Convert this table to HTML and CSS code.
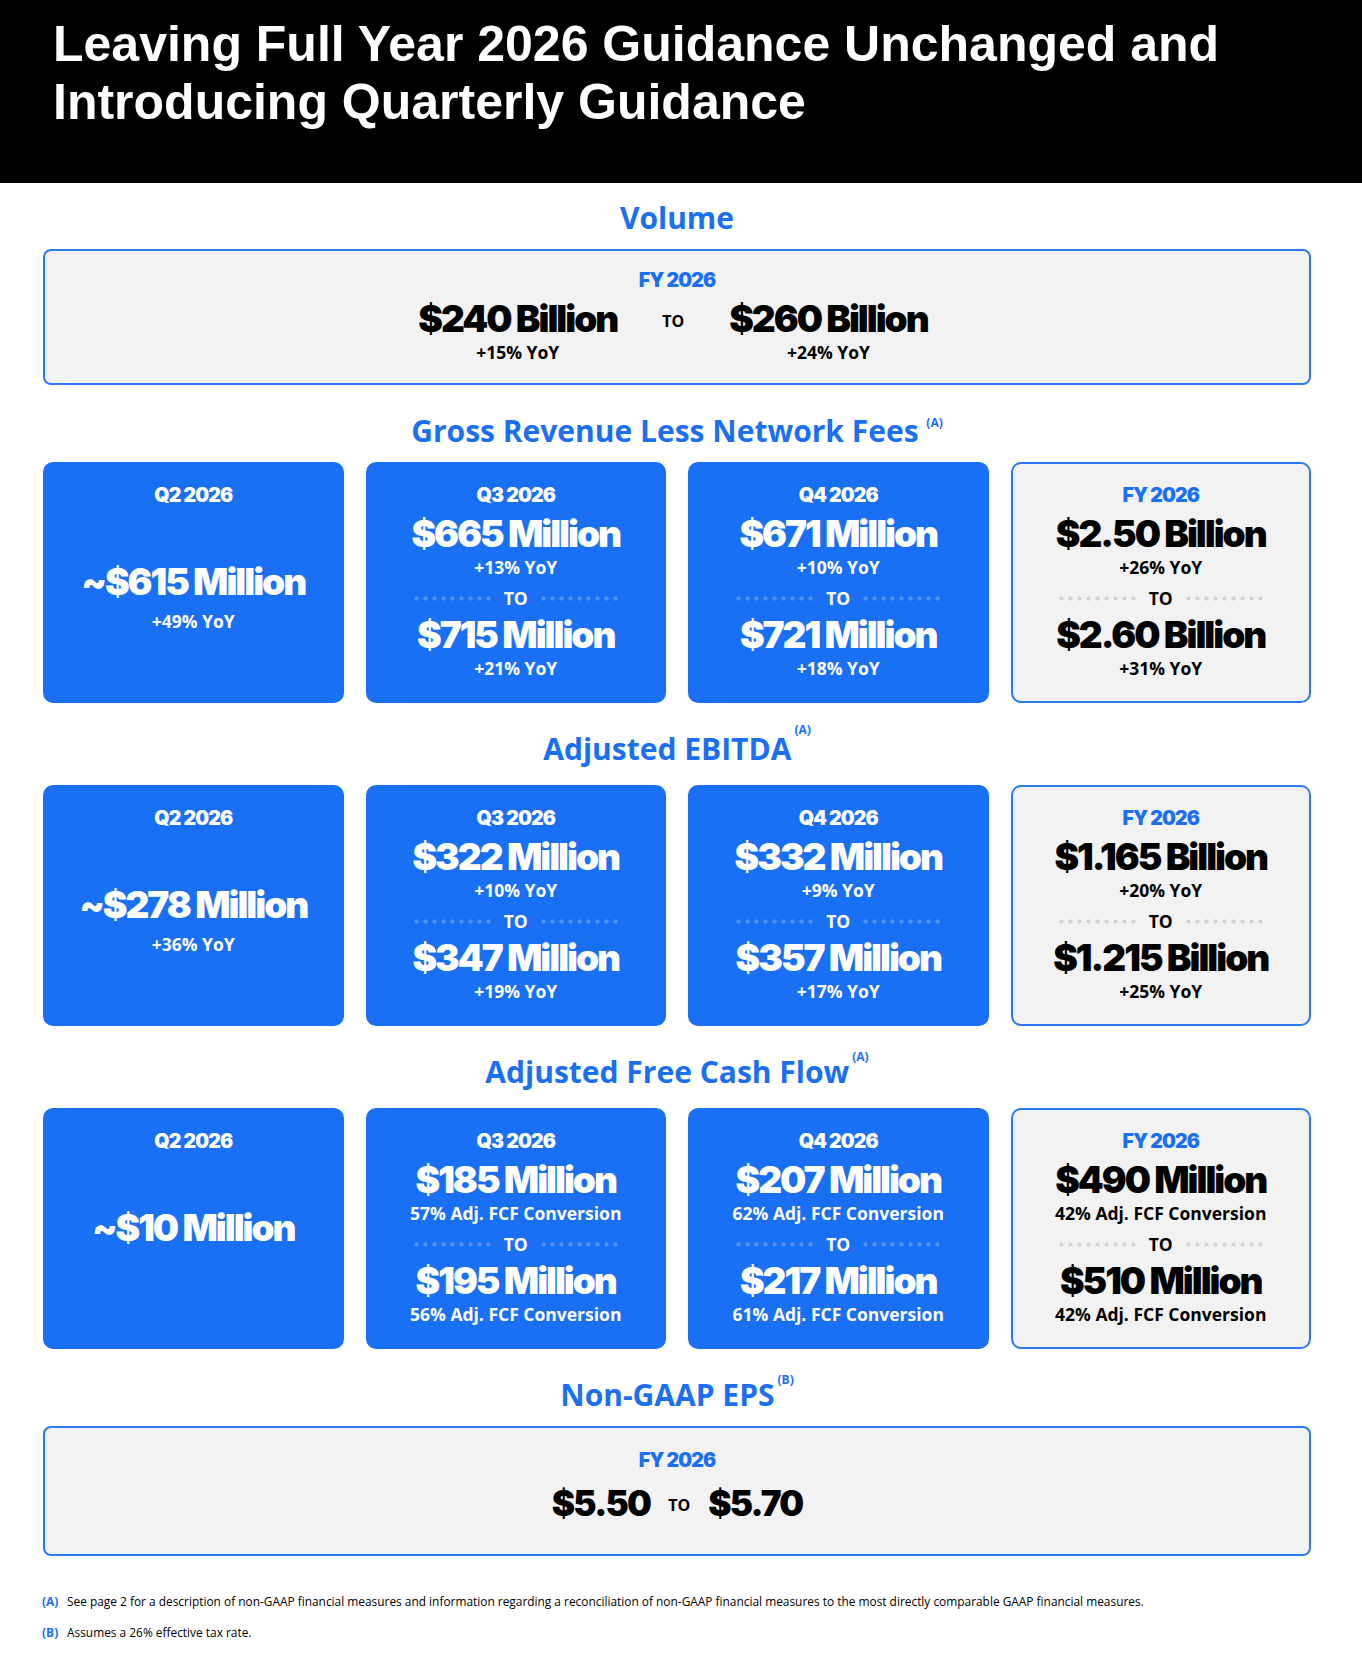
FILE: index.html
```html
<!DOCTYPE html>
<html lang="en">
<head>
<meta charset="utf-8">
<title>Guidance</title>
<link rel="stylesheet" href="styles.css">
</head>
<body>
<header class="hero">
  <h1 class="hero-title">Leaving Full Year 2026 Guidance Unchanged and<br>Introducing Quarterly Guidance</h1>
</header>
<main class="content">
  <section class="section section-first">
    <h2 class="sec-title">Volume</h2>
    <div class="panel panel-volume">
      <div class="label">FY 2026</div>
      <div class="range range-wide">
        <div class="range-item"><div class="num">$240 Billion</div><div class="sub">+15% YoY</div></div>
        <div class="to">TO</div>
        <div class="range-item"><div class="num">$260 Billion</div><div class="sub">+24% YoY</div></div>
      </div>
    </div>
  </section>

  <section class="section">
    <h2 class="sec-title">Gross Revenue Less Network Fees <sup class="mark mark-low">(A)</sup></h2>
    <div class="cards">
      <div class="card card-blue card-single">
        <div class="label">Q2 2026</div>
        <div class="num">~$615 Million</div>
        <div class="sub">+49% YoY</div>
      </div>
      <div class="card card-blue">
        <div class="label">Q3 2026</div>
        <div class="num">$665 Million</div>
        <div class="sub">+13% YoY</div>
        <div class="sep"><span class="dots"></span><span class="sep-to">TO</span><span class="dots"></span></div>
        <div class="num num-2">$715 Million</div>
        <div class="sub">+21% YoY</div>
      </div>
      <div class="card card-blue">
        <div class="label">Q4 2026</div>
        <div class="num">$671 Million</div>
        <div class="sub">+10% YoY</div>
        <div class="sep"><span class="dots"></span><span class="sep-to">TO</span><span class="dots"></span></div>
        <div class="num num-2">$721 Million</div>
        <div class="sub">+18% YoY</div>
      </div>
      <div class="card card-fy">
        <div class="label">FY 2026</div>
        <div class="num">$2.50 Billion</div>
        <div class="sub">+26% YoY</div>
        <div class="sep"><span class="dots"></span><span class="sep-to">TO</span><span class="dots"></span></div>
        <div class="num num-2">$2.60 Billion</div>
        <div class="sub">+31% YoY</div>
      </div>
    </div>
  </section>

  <section class="section section-tall">
    <h2 class="sec-title">Adjusted EBITDA<sup class="mark mark-high">(A)</sup></h2>
    <div class="cards">
      <div class="card card-blue card-single">
        <div class="label">Q2 2026</div>
        <div class="num">~$278 Million</div>
        <div class="sub">+36% YoY</div>
      </div>
      <div class="card card-blue">
        <div class="label">Q3 2026</div>
        <div class="num">$322 Million</div>
        <div class="sub">+10% YoY</div>
        <div class="sep"><span class="dots"></span><span class="sep-to">TO</span><span class="dots"></span></div>
        <div class="num num-2">$347 Million</div>
        <div class="sub">+19% YoY</div>
      </div>
      <div class="card card-blue">
        <div class="label">Q4 2026</div>
        <div class="num">$332 Million</div>
        <div class="sub">+9% YoY</div>
        <div class="sep"><span class="dots"></span><span class="sep-to">TO</span><span class="dots"></span></div>
        <div class="num num-2">$357 Million</div>
        <div class="sub">+17% YoY</div>
      </div>
      <div class="card card-fy">
        <div class="label">FY 2026</div>
        <div class="num">$1.165 Billion</div>
        <div class="sub">+20% YoY</div>
        <div class="sep"><span class="dots"></span><span class="sep-to">TO</span><span class="dots"></span></div>
        <div class="num num-2">$1.215 Billion</div>
        <div class="sub">+25% YoY</div>
      </div>
    </div>
  </section>

  <section class="section section-tall">
    <h2 class="sec-title">Adjusted Free Cash Flow<sup class="mark mark-mid">(A)</sup></h2>
    <div class="cards">
      <div class="card card-blue card-single">
        <div class="label">Q2 2026</div>
        <div class="num">~$10 Million</div>
      </div>
      <div class="card card-blue">
        <div class="label">Q3 2026</div>
        <div class="num">$185 Million</div>
        <div class="sub">57% Adj. FCF Conversion</div>
        <div class="sep"><span class="dots"></span><span class="sep-to">TO</span><span class="dots"></span></div>
        <div class="num num-2">$195 Million</div>
        <div class="sub">56% Adj. FCF Conversion</div>
      </div>
      <div class="card card-blue">
        <div class="label">Q4 2026</div>
        <div class="num">$207 Million</div>
        <div class="sub">62% Adj. FCF Conversion</div>
        <div class="sep"><span class="dots"></span><span class="sep-to">TO</span><span class="dots"></span></div>
        <div class="num num-2">$217 Million</div>
        <div class="sub">61% Adj. FCF Conversion</div>
      </div>
      <div class="card card-fy">
        <div class="label">FY 2026</div>
        <div class="num">$490 Million</div>
        <div class="sub">42% Adj. FCF Conversion</div>
        <div class="sep"><span class="dots"></span><span class="sep-to">TO</span><span class="dots"></span></div>
        <div class="num num-2">$510 Million</div>
        <div class="sub">42% Adj. FCF Conversion</div>
      </div>
    </div>
  </section>

  <section class="section">
    <h2 class="sec-title">Non-GAAP EPS<sup class="mark mark-mid">(B)</sup></h2>
    <div class="panel panel-eps">
      <div class="label">FY 2026</div>
      <div class="range range-tight">
        <div class="num">$5.50</div>
        <div class="to">TO</div>
        <div class="num">$5.70</div>
      </div>
    </div>
  </section>

  <footer class="notes">
    <p class="note"><span class="note-key">(A)</span>See page 2 for a description of non-GAAP financial measures and information regarding a reconciliation of non-GAAP financial measures to the most directly comparable GAAP financial measures.</p>
    <p class="note"><span class="note-key">(B)</span>Assumes a 26% effective tax rate.</p>
  </footer>
</main>
</body>
</html>
```

FILE: styles.css
```css
* { box-sizing: border-box; }

body {
  margin: 0;
  background: #ffffff;
  color: #000000;
  font-family: "Open Sans", "Liberation Sans", sans-serif;
  width: 1362px;
}

.hero {
  background: #000000;
  height: 183px;
  padding: 15px 0 0 53px;
}

.hero-title {
  margin: 0;
  font-family: "Liberation Sans", Arial, sans-serif;
  font-weight: 700;
  font-size: 50px;
  line-height: 58px;
  color: #ffffff;
}

.content {
  width: 1268px;
  margin-left: 43px;
}

.section { margin-top: 26px; }
.section-first { margin-top: 15px; }

.sec-title {
  margin: 0 0 11px;
  font-family: "Open Sans", "Liberation Sans", sans-serif;
  font-weight: 700;
  font-size: 30px;
  line-height: 40px;
  color: #1a6ff5;
  text-align: center;
}

.section-tall .sec-title { margin-bottom: 16px; }

.mark {
  font-size: 12px;
  line-height: 0;
  font-weight: 700;
}
.mark-low { vertical-align: 15px; }
.mark-high { vertical-align: 26px; margin-left: 3px; }
.mark-mid { vertical-align: 22px; margin-left: 3px; }

/* shared text styles */
.label {
  font-family: "Inter", "Liberation Sans", sans-serif;
  font-weight: 900;
  font-size: 19.5px;
  line-height: 24px;
  letter-spacing: -0.045em;
  color: #1a6ff5;
}

.num {
  font-family: "Inter", "Liberation Sans", sans-serif;
  font-weight: 900;
  font-size: 37px;
  line-height: 40px;
  letter-spacing: -0.055em;
  color: #000000;
  white-space: nowrap;
}

.sub {
  font-family: "Open Sans", "Liberation Sans", sans-serif;
  font-weight: 700;
  font-size: 17.5px;
  line-height: 26px;
  white-space: nowrap;
}

/* panels (volume / eps) */
.panel {
  background: #f2f2f2;
  border: 2px solid #2a7af6;
  border-radius: 8px;
  display: flex;
  flex-direction: column;
  align-items: center;
}

.panel-volume { height: 136px; padding-top: 17px; }
.panel-eps { height: 130px; padding-top: 20px; }

.range {
  display: flex;
  align-items: flex-start;
  justify-content: center;
}
.range-wide { gap: 45px; margin-top: 7px; margin-left: -8px; }
.range-tight { gap: 18px; margin-top: 11px; }

.panel-eps .num { font-size: 35px; letter-spacing: -0.05em; }

.range-item {
  display: flex;
  flex-direction: column;
  align-items: center;
}

.to {
  font-family: "Open Sans", "Liberation Sans", sans-serif;
  font-weight: 700;
  font-size: 16px;
  line-height: 24px;
  margin-top: 10px;
}

/* cards */
.cards {
  display: grid;
  grid-template-columns: repeat(4, 1fr);
  gap: 22px;
}

.card {
  height: 241px;
  border: 2px solid #1a70f5;
  border-radius: 10px;
  padding-top: 19px;
  display: flex;
  flex-direction: column;
  align-items: center;
}

.card .num { margin-top: 7px; }
.card .num-2 { margin-top: 5px; }

.card-blue {
  background: #1a70f5;
  color: #ffffff;
}
.card-blue .label,
.card-blue .num { color: #ffffff; }

.card-fy {
  background: #f2f2f2;
  border-color: #2a7af6;
}

.card-single .num { margin-top: 55px; }
.card-single .sub { margin-top: 6px; }

.sep {
  margin-top: 6px;
  height: 24px;
  display: flex;
  align-items: center;
  gap: 11px;
}

.sep-to {
  font-family: "Open Sans", "Liberation Sans", sans-serif;
  font-weight: 700;
  font-size: 17.5px;
  line-height: 24px;
}

.dots {
  width: 81px;
  height: 5px;
  margin-top: 1px;
  background-image: radial-gradient(circle, #d3d3d3 1.8px, rgba(211,211,211,0) 2.4px);
  background-size: 9px 5px;
  background-repeat: repeat-x;
}
.card-blue .dots {
  background-image: radial-gradient(circle, #5392f8 1.8px, rgba(83,146,248,0) 2.4px);
}

/* footnotes */
.notes { margin-top: 35px; }

.note {
  margin: 0 0 10px;
  font-family: "Open Sans", "Liberation Sans", sans-serif;
  font-size: 11.9px;
  line-height: 20px;
  display: flex;
  align-items: baseline;
  margin-left: -1px;
}

.note-key {
  width: 25px;
  flex: none;
  color: #1a6ff5;
  font-weight: 700;
  font-size: 12px;
}
```
